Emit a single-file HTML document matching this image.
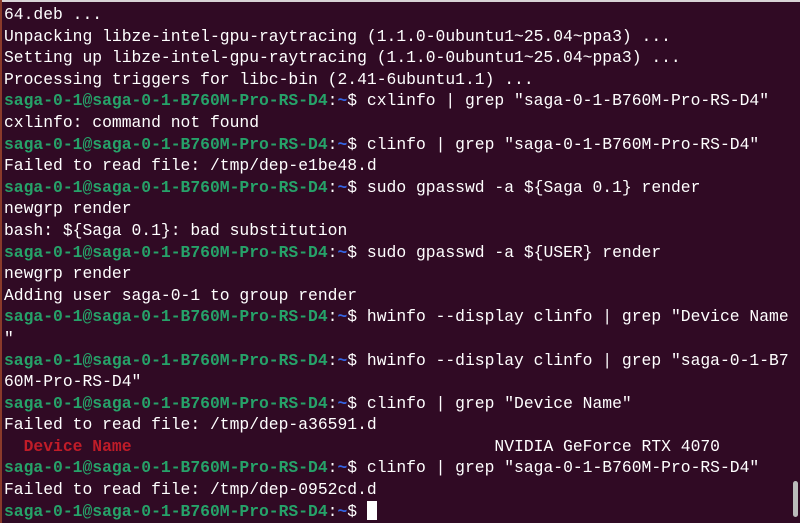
<!DOCTYPE html><html><head><style>
body{margin:0;width:800px;height:523px;background:#300a24;overflow:hidden;position:relative}
.top{position:absolute;left:0;top:0;width:800px;height:2px;background:#d8d4d6}
.left{position:absolute;left:0;top:0;width:2px;height:523px;background:#8a3a2a}
pre{margin:0;position:absolute;left:4px;top:4px;font-family:"Liberation Mono",monospace;font-size:16.35px;line-height:21.6px;color:#ffffff}
.g{color:#26a269;font-weight:bold}.b{color:#3465e4;font-weight:bold}.r{color:#c01c28;font-weight:bold}
.cur{display:inline-block;width:10px;height:19px;background:#fff;vertical-align:-4px}
.sb{position:absolute;left:793px;top:481px;width:5px;height:36px;border-radius:3px;background:#bbb}
</style></head><body><div class="top"></div><div class="left"></div><pre>64.deb ...
Unpacking libze-intel-gpu-raytracing (1.1.0-0ubuntu1~25.04~ppa3) ...
Setting up libze-intel-gpu-raytracing (1.1.0-0ubuntu1~25.04~ppa3) ...
Processing triggers for libc-bin (2.41-6ubuntu1.1) ...
<span class="g">saga-0-1@saga-0-1-B760M-Pro-RS-D4</span>:<span class="b">~</span>$ cxlinfo | grep "saga-0-1-B760M-Pro-RS-D4"
cxlinfo: command not found
<span class="g">saga-0-1@saga-0-1-B760M-Pro-RS-D4</span>:<span class="b">~</span>$ clinfo | grep "saga-0-1-B760M-Pro-RS-D4"
Failed to read file: /tmp/dep-e1be48.d
<span class="g">saga-0-1@saga-0-1-B760M-Pro-RS-D4</span>:<span class="b">~</span>$ sudo gpasswd -a ${Saga 0.1} render
newgrp render
bash: ${Saga 0.1}: bad substitution
<span class="g">saga-0-1@saga-0-1-B760M-Pro-RS-D4</span>:<span class="b">~</span>$ sudo gpasswd -a ${USER} render
newgrp render
Adding user saga-0-1 to group render
<span class="g">saga-0-1@saga-0-1-B760M-Pro-RS-D4</span>:<span class="b">~</span>$ hwinfo --display clinfo | grep "Device Name
"
<span class="g">saga-0-1@saga-0-1-B760M-Pro-RS-D4</span>:<span class="b">~</span>$ hwinfo --display clinfo | grep "saga-0-1-B7
60M-Pro-RS-D4"
<span class="g">saga-0-1@saga-0-1-B760M-Pro-RS-D4</span>:<span class="b">~</span>$ clinfo | grep "Device Name"
Failed to read file: /tmp/dep-a36591.d
  <span class="r">Device Name</span>                                     NVIDIA GeForce RTX 4070
<span class="g">saga-0-1@saga-0-1-B760M-Pro-RS-D4</span>:<span class="b">~</span>$ clinfo | grep "saga-0-1-B760M-Pro-RS-D4"
Failed to read file: /tmp/dep-0952cd.d
<span class="g">saga-0-1@saga-0-1-B760M-Pro-RS-D4</span>:<span class="b">~</span>$ <span class="cur"></span></pre><div class="sb"></div></body></html>
